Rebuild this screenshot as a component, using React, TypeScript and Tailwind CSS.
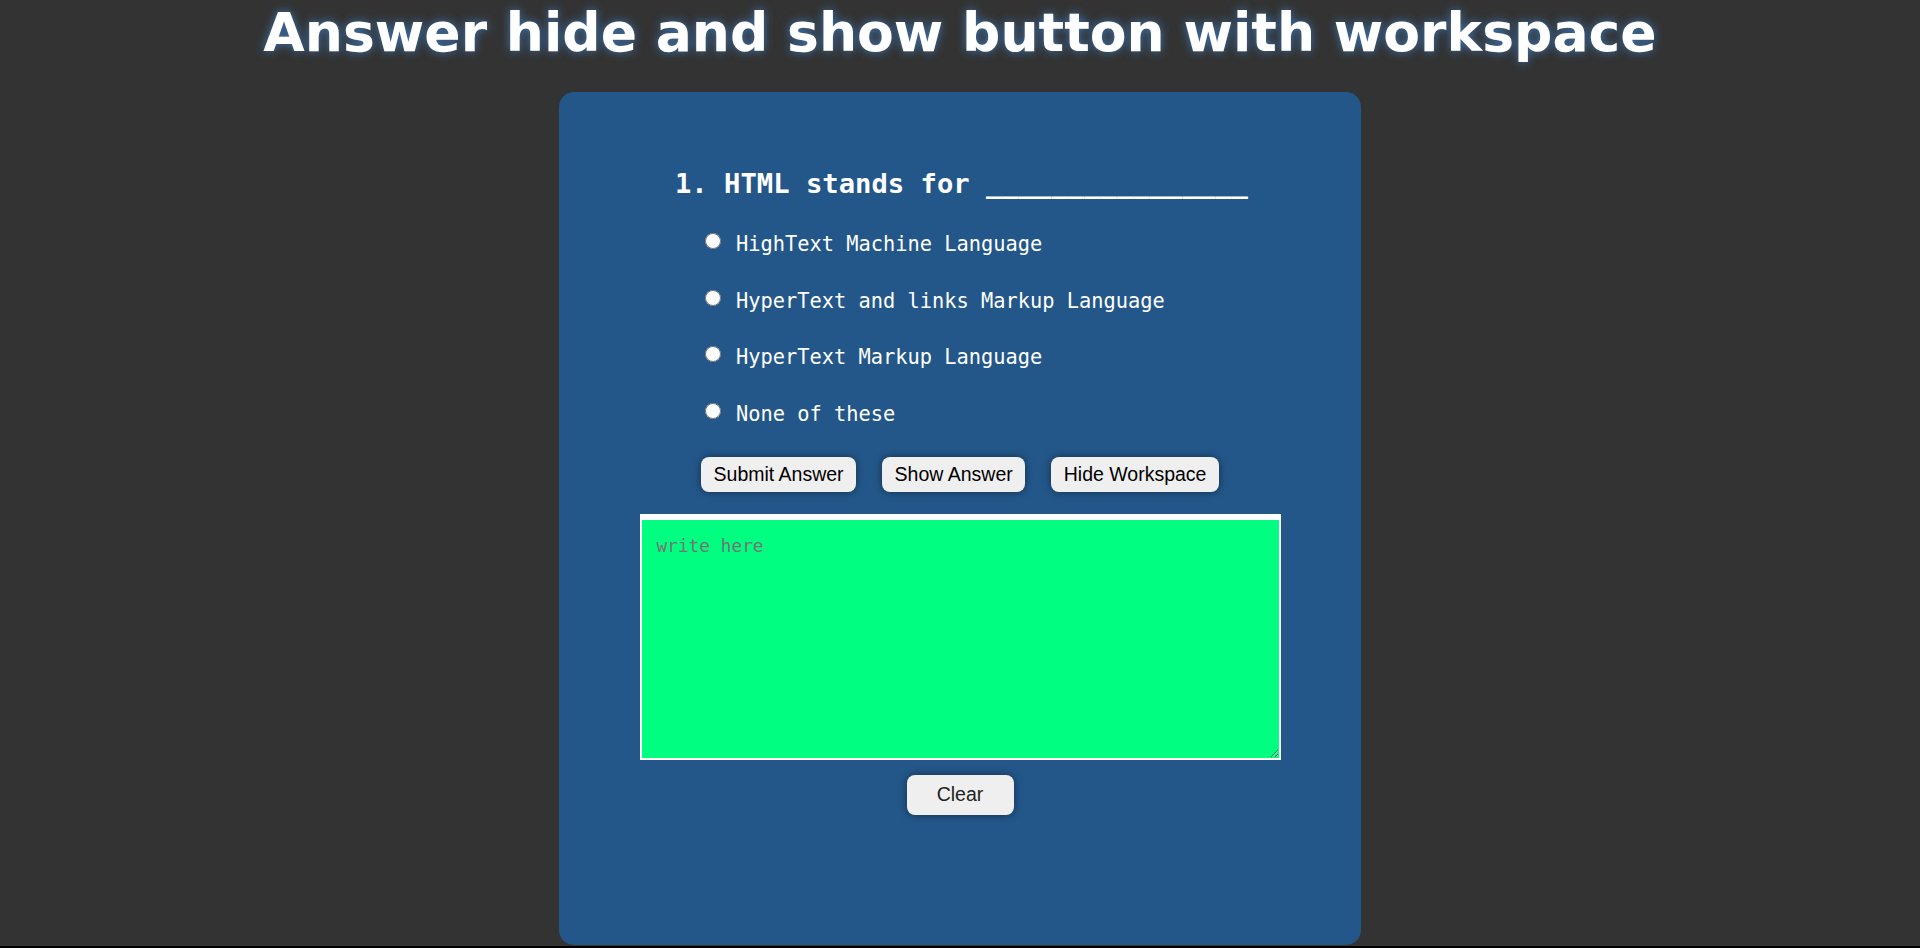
import React, { useState } from 'react';

const options = [
  'HighText Machine Language',
  'HyperText and links Markup Language',
  'HyperText Markup Language',
  'None of these',
];

export default function App() {
  const [picked, setPicked] = useState<number | null>(null);
  const [notes, setNotes] = useState('');
  const [showWork, setShowWork] = useState(true);

  return (
    <div className="w-full h-screen bg-black overflow-hidden">
      <div className="bg-[#333333] h-[946px] flex flex-col items-center">
        {/* Page title with soft blue glow */}
        <h1 className="mt-[2px] h-[62px] leading-[62px] text-[53.6px] font-bold text-white font-['DejaVu_Sans',sans-serif] [text-shadow:0_0_10px_rgba(66,140,220,0.75)] whitespace-nowrap">
          Answer hide and show button with workspace
        </h1>

        {/* Question card */}
        <div className="mt-[28px] w-[802px] h-[853px] bg-[#23578a] rounded-[15px] flex flex-col items-center pt-[76px]">
          <div className="w-[570px] font-['DejaVu_Sans_Mono',monospace] text-white">
            <h2 className="text-[27.2px] leading-[32px] font-bold whitespace-pre">
              {'1. HTML stands for ________________'}
            </h2>

            <div className="mt-[32px] ml-[30px] flex flex-col gap-[32.6px]">
              {options.map((opt, i) => (
                <label key={opt} className="h-[24px] flex items-start gap-[15px] cursor-pointer">
                  <input
                    type="radio"
                    name="q1"
                    checked={picked === i}
                    onChange={() => setPicked(i)}
                    className="w-4 h-4 m-0 mt-[1px] shrink-0"
                  />
                  <span className="text-[20.35px] leading-[24px] whitespace-pre">{opt}</span>
                </label>
              ))}
            </div>
          </div>

          <div className="mt-[31px] flex gap-[26px] font-['Liberation_Sans',Arial,sans-serif]">
            <button className="h-[35px] px-[12.5px] bg-[#efefef] text-black text-[19.5px] rounded-[8px] shadow-[0_0_8px_rgba(0,0,0,0.45)]">
              Submit Answer
            </button>
            <button className="h-[35px] px-[12.5px] bg-[#efefef] text-black text-[19.5px] rounded-[8px] shadow-[0_0_8px_rgba(0,0,0,0.45)]">
              Show Answer
            </button>
            <button
              onClick={() => setShowWork(!showWork)}
              className="h-[35px] px-[12.5px] bg-[#efefef] text-black text-[19.5px] rounded-[8px] shadow-[0_0_8px_rgba(0,0,0,0.45)]"
            >
              {showWork ? 'Hide Workspace' : 'Show Workspace'}
            </button>
          </div>

          {showWork && (
            <>
              <textarea
                autoFocus
                value={notes}
                onChange={(e) => setNotes(e.target.value)}
                placeholder="write here"
                className="mt-[22px] w-[641px] h-[246px] block bg-[#00ff80] border-2 border-t-[6px] border-white p-[15px] text-[17.8px] leading-[22px] font-['DejaVu_Sans_Mono',monospace] text-black caret-black placeholder:text-[#757575] outline-none"
              />
              <button
                onClick={() => setNotes('')}
                className="mt-[15px] w-[107px] h-[40px] bg-[#efefef] text-[#222] text-[19.5px] rounded-[8px] font-['Liberation_Sans',Arial,sans-serif] shadow-[0_0_8px_rgba(0,0,0,0.45)]"
              >
                Clear
              </button>
            </>
          )}
        </div>
      </div>
    </div>
  );
}
